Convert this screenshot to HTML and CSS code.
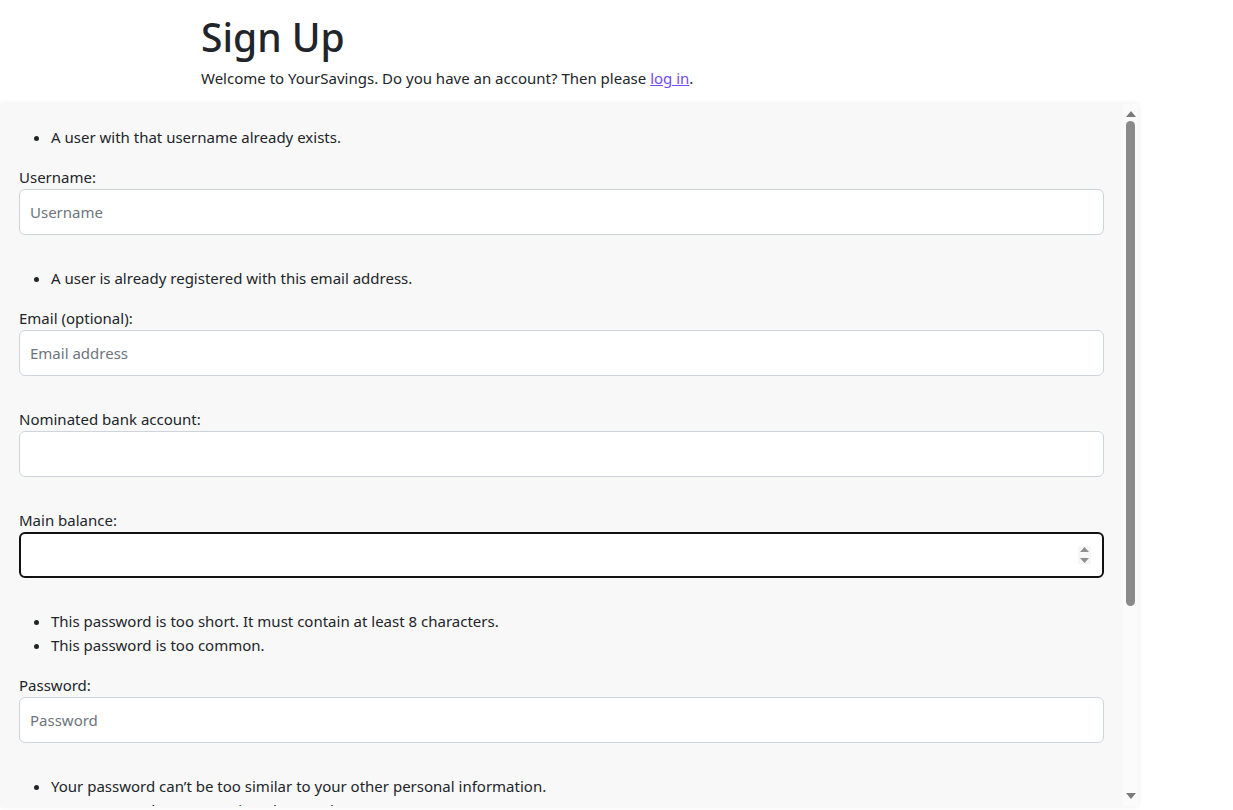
FILE: index.html
```html
<!DOCTYPE html>
<html lang="en">
<head>
<meta charset="utf-8">
<title>Sign Up</title>
<link rel="stylesheet" href="styles.css">
</head>
<body>
<header class="intro">
  <h1 class="intro-title">Sign Up</h1>
  <p class="intro-text">Welcome to YourSavings. Do you have an account? Then please <a class="intro-link" href="#">log in</a>.</p>
</header>
<main class="panel">
  <form class="panel-content">
    <div class="field">
      <ul class="errors"><li>A user with that username already exists.</li></ul>
      <label class="field-label" for="username">Username:</label>
      <input class="field-input" id="username" type="text" placeholder="Username">
    </div>
    <div class="field">
      <ul class="errors"><li>A user is already registered with this email address.</li></ul>
      <label class="field-label" for="email">Email (optional):</label>
      <input class="field-input" id="email" type="email" placeholder="Email address">
    </div>
    <div class="field">
      <label class="field-label" for="bank">Nominated bank account:</label>
      <input class="field-input" id="bank" type="text">
    </div>
    <div class="field">
      <label class="field-label" for="balance">Main balance:</label>
      <div class="number-box">
        <input class="number-input" id="balance" type="text">
        <span class="spinner">
          <svg width="13" height="18" viewBox="0 0 13 18"><path d="M2 6 L6.5 1 L11 6 Z" fill="#8f8f8f"/><path d="M2 12 L11 12 L6.5 17 Z" fill="#8f8f8f"/></svg>
        </span>
      </div>
    </div>
    <div class="field">
      <ul class="errors"><li>This password is too short. It must contain at least 8 characters.</li><li>This password is too common.</li></ul>
      <label class="field-label" for="password">Password:</label>
      <input class="field-input" id="password" type="password" placeholder="Password">
    </div>
    <div class="field">
      <ul class="errors"><li>Your password can’t be too similar to your other personal information.</li><li>Your password must contain at least 8 characters.</li><li>Your password can’t be a commonly used password.</li><li>Your password can’t be entirely numeric.</li></ul>
    </div>
  </form>
  <div class="scrollbar">
    <svg class="scroll-arrow" width="10" height="7" viewBox="0 0 10 7"><path d="M0 7 L5 1 L10 7 Z" fill="#7a7a7a"/></svg>
    <div class="scroll-track"><div class="scroll-thumb"></div></div>
    <svg class="scroll-arrow" width="10" height="7" viewBox="0 0 10 7"><path d="M0 0 L10 0 L5 6 Z" fill="#7a7a7a"/></svg>
  </div>
</main>
</body>
</html>
```
FILE: styles.css
```css
* { box-sizing: border-box; }
html, body { margin: 0; padding: 0; }
body {
  width: 1233px;
  height: 810px;
  overflow: hidden;
  background: #fff;
  color: #212529;
  font-family: "Noto Sans", "Open Sans", sans-serif;
  font-size: 15px;
  line-height: 24px;
}
.intro {
  padding: 13px 0 0 201px;
}
.intro-title {
  margin: 0 0 5px;
  font-size: 39px;
  line-height: 48px;
  font-weight: 500;
}
.intro-text {
  margin: 0 0 14px;
}
.intro-link {
  color: #6f4ef2;
  text-decoration: underline;
}
.panel {
  display: flex;
  width: 1138px;
  height: 702px;
  background: #f8f8f8;
  box-shadow: 0 0 6px rgba(0, 0, 0, 0.08);
}
.panel-content {
  flex: 1;
  overflow: hidden;
  padding: 21px 19px 0 19px;
}
.field {
  margin-bottom: 31px;
}
.errors {
  margin: 0 0 16px;
  padding-left: 32px;
}
.field-label {
  display: block;
}
.field-input,
.number-box {
  display: block;
  width: 100%;
  height: 46px;
  margin: 0;
  padding: 0 10px;
  font: inherit;
  color: #212529;
  background: #fff;
  border: 1px solid #ced4da;
  border-radius: 6px;
  outline: none;
}
.field-input::placeholder {
  color: #6c757d;
}
.number-box {
  display: flex;
  align-items: center;
  border: 2px solid #111;
  padding: 0 11px 0 9px;
}
.number-input {
  flex: 1;
  border: 0;
  outline: none;
  background: transparent;
  font: inherit;
  padding: 0;
}
.spinner {
  display: flex;
  background: #f6f6f6;
}
.scrollbar {
  width: 15px;
  display: flex;
  flex-direction: column;
  align-items: center;
  padding: 6px 0 6px;
  background: #fbfbfb;
}
.scroll-arrow {
  flex: none;
}
.scroll-track {
  flex: 1;
  padding-top: 4px;
}
.scroll-thumb {
  width: 9px;
  height: 485px;
  border-radius: 5px;
  background: #8a8a8a;
}
```
